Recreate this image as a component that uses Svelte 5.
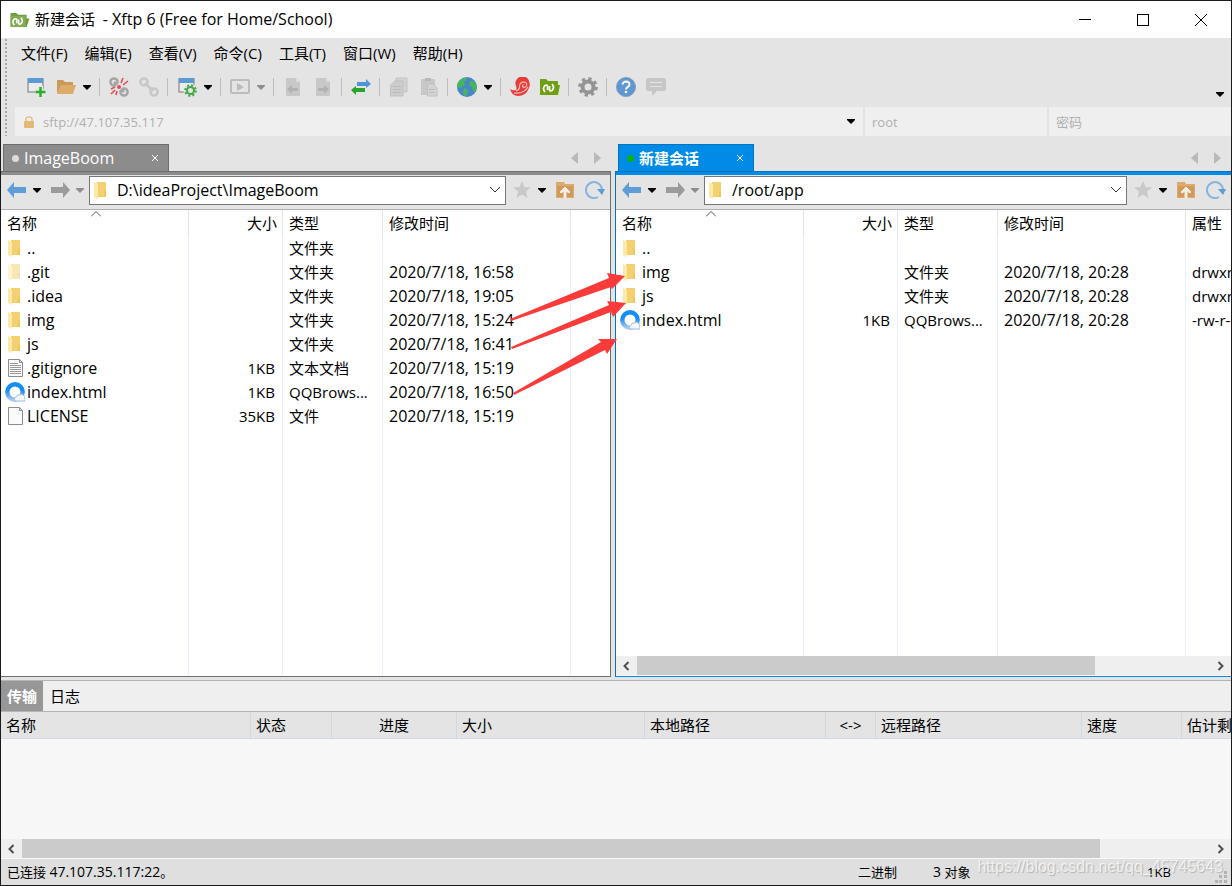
<script lang="ts">
  type IconName = 'folder' | 'folder-dim' | 'text' | 'html' | 'file';

  interface FileRow {
    icon: IconName;
    name: string;
    size?: string;
    type?: string;
    time?: string;
    attr?: string;
  }

  interface Pane {
    id: string;
    title: string;
    path: string;
    remote: boolean;
    rows: FileRow[];
  }

  const menus = ['文件(F)', '编辑(E)', '查看(V)', '命令(C)', '工具(T)', '窗口(W)', '帮助(H)'];

  // '|' is a separator, 'v' a drop-down caret, 'x' a disabled caret
  const tools = [
    'new', 'open', 'v', '|', 'disconnect', 'link', '|', 'config', 'v', '|', 'play', 'x', '|',
    'back', 'forward', '|', 'transfer', '|', 'copy', 'paste', '|', 'globe', 'v', '|',
    'xshell', 'xftp', '|', 'gear', '|', 'help', 'chat'
  ];

  const panes: Pane[] = [
    {
      id: 'local',
      title: 'ImageBoom',
      path: 'D:\\ideaProject\\ImageBoom',
      remote: false,
      rows: [
        { icon: 'folder', name: '..', type: '文件夹' },
        { icon: 'folder-dim', name: '.git', type: '文件夹', time: '2020/7/18, 16:58' },
        { icon: 'folder', name: '.idea', type: '文件夹', time: '2020/7/18, 19:05' },
        { icon: 'folder', name: 'img', type: '文件夹', time: '2020/7/18, 15:24' },
        { icon: 'folder', name: 'js', type: '文件夹', time: '2020/7/18, 16:41' },
        { icon: 'text', name: '.gitignore', size: '1KB', type: '文本文档', time: '2020/7/18, 15:19' },
        { icon: 'html', name: 'index.html', size: '1KB', type: 'QQBrows...', time: '2020/7/18, 16:50' },
        { icon: 'file', name: 'LICENSE', size: '35KB', type: '文件', time: '2020/7/18, 15:19' }
      ]
    },
    {
      id: 'remote',
      title: '新建会话',
      path: '/root/app',
      remote: true,
      rows: [
        { icon: 'folder', name: '..' },
        { icon: 'folder', name: 'img', type: '文件夹', time: '2020/7/18, 20:28', attr: 'drwxr-xr-x' },
        { icon: 'folder', name: 'js', type: '文件夹', time: '2020/7/18, 20:28', attr: 'drwxr-xr-x' },
        { icon: 'html', name: 'index.html', size: '1KB', type: 'QQBrows...', time: '2020/7/18, 20:28', attr: '-rw-r--r--' }
      ]
    }
  ];

  const queueColumns = [
    { label: '名称', width: 250 },
    { label: '状态', width: 81 },
    { label: '进度', width: 125, center: true },
    { label: '大小', width: 188 },
    { label: '本地路径', width: 181 },
    { label: '<->', width: 50, center: true },
    { label: '远程路径', width: 206 },
    { label: '速度', width: 100 },
    { label: '估计剩余时间', width: 150 }
  ];

  let queueTab = $state('传输');
</script>

{#snippet caret(disabled: boolean, label: string)}
  <button class="caret" {disabled} aria-label={label}>
    <svg width="8" height="5" viewBox="0 0 8 5"><path d="M0 0h8v1L4 5 0 1z" fill={disabled ? '#8e8e8e' : '#000'} /></svg>
  </button>
{/snippet}

{#snippet xftpMark()}
  <path d="M6 14q-3-3.500 0-6.500 2-1 2.500.5V12M13 6q3 3.500 0 6.500-2 1-2.500-.5V8" fill="none" stroke="#fff" stroke-width="1.700" />
{/snippet}

{#snippet toolIcon(name: string)}
  <svg width="20" height="20" viewBox="0 0 20 20">
    {#if name === 'new' || name === 'config'}
      <rect x="2" y="2" width="15" height="13" fill="#ececec" stroke="#9b9b9b" stroke-width="1.500" />
      <rect x="2" y="1" width="15" height="5" fill="#5b9bd5" />
      {#if name === 'new'}
        <path d="M14.500 9v11M9 14.500h11" stroke="#e4e4e4" stroke-width="5" />
        <path d="M14.500 10v10M9.500 15h10" stroke="#2cae2c" stroke-width="2.500" />
      {:else}
        <circle cx="13.500" cy="13.500" r="7" fill="#e4e4e4" />
        <circle cx="13.500" cy="13.500" r="3.500" fill="none" stroke="#43a843" stroke-width="2" />
        <circle cx="13.500" cy="13.500" r="5.300" fill="none" stroke="#43a843" stroke-width="2" stroke-dasharray="2.080" />
      {/if}
    {:else if name === 'open'}
      <path d="M1 17V3h6l2 2h8v4H5z" fill="#c99a5a" />
      <path d="M1 17 5 8h15l-3 9z" fill="#dcab68" />
    {:else if name === 'disconnect' || name === 'link'}
      <g fill="none" stroke={name === 'link' ? '#c8c8c8' : '#a5a5a5'} stroke-width="2.500">
        <circle cx="5" cy="5" r="3.600" />
        <circle cx="15" cy="15" r="3.600" />
        {#if name === 'link'}
          <path d="m6 6 8 8" stroke-width="3" />
        {:else}
          <path d="m5 5 4 4M11 11l4 4" />
        {/if}
      </g>
      {#if name === 'disconnect'}
        <path d="m8 8 4 4" stroke="#e4e4e4" stroke-width="4" />
        <path d="m12 6 2-5M14 8l5-4M2 12l4-2M2 17l4-4M7 18l1-4" stroke="#e44c53" stroke-width="1.600" />
        <circle cx="10" cy="10" r="2" fill="#e44c53" />
      {/if}
    {:else if name === 'play'}
      <rect x="1" y="3" width="18" height="13" rx="1" fill="none" stroke="#bcbcbc" stroke-width="2" />
      <path d="m7 6 7 4-7 4z" fill="#bcbcbc" />
    {:else if name === 'back' || name === 'forward'}
      <path d="M3 1h10l4 4v14H3z" fill="#c8c8c8" />
      <path d="M13 1v4h4" fill="#dcdcdc" />
      {#if name === 'back'}
        <path d="m4 12 5-4v3h6v3H9v3z" fill="#b2b2b2" />
      {:else}
        <path d="m16 12-5-4v3H5v3h6v3z" fill="#b2b2b2" />
      {/if}
    {:else if name === 'transfer'}
      <path d="M6 5h9V2l5 5-5 4V9H6z" fill="#4f93d8" />
      <path d="M14 11H5V9l-5 4 5 5v-3h9z" fill="#2aa52a" />
    {:else if name === 'copy'}
      <path d="M7 1h11v14H7z" fill="#d2d2d2" stroke="#c4c4c4" />
      <path d="M1.500 8 6 4h8v15H1.500z" fill="#cdcdcd" stroke="#c0c0c0" />
      <path d="M4 9.500h8M4 12.500h8M4 15.500h8" stroke="#bababa" />
    {:else if name === 'paste'}
      <path d="M2 2h14v16H2z" fill="#c8c8c8" />
      <path d="M6 1h6v3H6z" fill="#b8b8b8" />
      <path d="M8.500 7H14l4 4v8H8.500z" fill="#d4d4d4" stroke="#c0c0c0" />
      <path d="M10 12.500h6M10 15.500h6" stroke="#bababa" />
    {:else if name === 'globe'}
      <circle cx="10" cy="10" r="10" fill="#4a86c5" />
      <path d="M2 4q4-4 8-3-1 3-3 4l1 3-3 2-2 1-3-1q0-4 2-6M7 11l4 2-1 5-3 1-1-4zM13 4l4 0q3 3 3 7l-2 4-2-1-1-4-3-2z" fill="#43b65f" />
    {:else if name === 'xshell'}
      <path d="M6 9a7 7 0 0 1 12-7q3 4 1 9-3 8-11 8-6 0-8-7 3 2 6 1 1-1 0-4z" fill="#e93d3a" />
      <path d="M6 14q4-1 3.500-5 .5-4 4.500-4 3.500.5 2.500 4-2 2.500-4 .5 0-1.500 1-2M4 16q10 1 14-6" fill="none" stroke="#f3c6c2" stroke-width="1.100" />
    {:else if name === 'xftp'}
      <path d="M0 2h6l2 2h10v4h2l-2 10H0z" fill="#6f9f13" />
      <g transform="translate(-1 1)">{@render xftpMark()}</g>
    {:else if name === 'gear'}
      <circle cx="10" cy="10" r="5.500" fill="none" stroke="#949494" stroke-width="4" />
      <circle cx="10" cy="10" r="8.300" fill="none" stroke="#949494" stroke-width="3" stroke-dasharray="3.260" />
    {:else if name === 'help'}
      <circle cx="10" cy="10" r="9.500" fill="#5f97d3" stroke="#7c9dc0" />
      <path d="M6.500 7.500q.5-3 3.500-3 3.500.2 3.500 3 0 1.500-2 2.700-1.500 1-1.500 2.300" fill="none" stroke="#fff" stroke-width="2" />
      <circle cx="10" cy="15" r="1.300" fill="#fff" />
    {:else if name === 'chat'}
      <path d="M2 1h16q2 0 2 2v9q0 2-2 2h-7l-5 5v-5H2q-2 0-2-2V3q0-2 2-2z" fill="#c6c6c6" />
      <path d="M4 5.500h12M4 9.500h12" stroke="#e4e4e4" />
    {/if}
  </svg>
{/snippet}

{#snippet fileIcon(name: IconName)}
  {#if name === 'folder' || name === 'folder-dim'}
    <svg width="20" height="20" viewBox="0 0 20 20" opacity={name === 'folder-dim' ? 0.5 : 1}>
      <path d="M6 2h9v15H5z" fill="#f3d070" />
      <path d="M13 11h2v6h-2z" fill="#eec558" />
      <path d="m3 2 4 2v14l-1 1-3-2z" fill="#ffe9a8" />
    </svg>
  {:else if name === 'html'}
    <svg width="20" height="20" viewBox="0 0 20 20">
      <defs>
        <linearGradient id="ring" x1="0" y1="0" x2="0" y2="1">
          <stop offset="0.400" stop-color="#168cf5" />
          <stop offset="1" stop-color="#a9c9e8" />
        </linearGradient>
      </defs>
      <circle cx="10" cy="10" r="7.700" fill="#fff" stroke="url(#ring)" stroke-width="4.400" />
      <path d="M10 19q-2-3 1-4 1-3 4-2 1-2 3 0 2 1 2 4v2z" fill="#f4f8fd" stroke="#9dbbe0" />
    </svg>
  {:else}
    <svg width="20" height="20" viewBox="0 0 20 20">
      <path d="M3.500 1.500h11l3 3v14h-14z" fill="#fafafa" stroke="#8b8b8b" />
      <path d="M14.500 1.500v3h3" fill="none" stroke="#8b8b8b" />
      {#if name === 'text'}
        <path d="M5 5.500h8M5 7.500h11M5 9.500h11M5 11.500h11M5 13.500h11M5 15.500h11" stroke="#9a9a9a" />
      {/if}
    </svg>
  {/if}
{/snippet}

{#snippet scrollbar(thumb: number)}
  <div class="scrollbar">
    <button aria-label="向左滚动">
      <svg width="8" height="10" viewBox="0 0 8 10"><path d="M5.500 1 1.500 5l4 4" fill="none" stroke="#505050" stroke-width="2" /></svg>
    </button>
    <div class="track"><div class="thumb" style={`width: ${thumb}%`}></div></div>
    <button aria-label="向右滚动">
      <svg width="8" height="10" viewBox="0 0 8 10"><path d="m1.500 1 4 4-4 4" fill="none" stroke="#505050" stroke-width="2" /></svg>
    </button>
  </div>
{/snippet}

<div class="window">
  <header class="titlebar">
    <svg width="20" height="16" viewBox="0 1 20 17">
      <path d="M0 2h6l2 2h9v4h3l-3 9H0z" fill="#6f9a3e" />
      <path d="M0 5h16v12H0z" fill="#82ab52" />
      <g transform="translate(-2 1)">{@render xftpMark()}</g>
    </svg>
    <h1>新建会话&nbsp; <span class="latin">- Xftp 6 (Free for Home/School)</span></h1>
    <div class="controls">
      <button aria-label="最小化"><svg width="14" height="14" viewBox="0 0 14 14"><path d="M1 6.500h12" stroke="#000" /></svg></button>
      <button aria-label="最大化"><svg width="14" height="14" viewBox="0 0 14 14"><rect x="1.500" y="1.500" width="11" height="11" fill="none" stroke="#000" /></svg></button>
      <button aria-label="关闭"><svg width="14" height="14" viewBox="0 0 14 14"><path d="m1 1 12 12M13 1 1 13" stroke="#000" /></svg></button>
    </div>
  </header>

  <div class="bars">
    <nav class="menu">
      {#each menus as item}
        <button>{item}</button>
      {/each}
    </nav>

    <div class="toolbar">
      {#each tools as tool}
        {#if tool === '|'}
          <span class="sep"></span>
        {:else if tool === 'v' || tool === 'x'}
          {@render caret(tool === 'x', '更多')}
        {:else}
          <button class="tool" aria-label={tool}>{@render toolIcon(tool)}</button>
        {/if}
      {/each}
      <div class="overflow">{@render caret(false, '工具栏选项')}</div>
    </div>

    <div class="address">
      <div class="host">
        <svg width="12" height="12" viewBox="0 0 12 12">
          <path d="M3 6V3q0-2 3-2t3 2v3" fill="none" stroke="#e4c08a" stroke-width="1.500" />
          <rect x="1" y="5" width="10" height="7" rx="1" fill="#e6b877" />
        </svg>
        <input aria-label="主机" placeholder="sftp://47.107.35.117" />
        {@render caret(false, '主机列表')}
      </div>
      <input class="user" aria-label="用户名" placeholder="root" />
      <input class="password" aria-label="密码" type="password" placeholder="密码" />
    </div>
  </div>

  <main class="panes">
    {#each panes as pane}
      <section class="pane" class:remote={pane.remote}>
        <div class="tabs">
          <div class="tab">
            <span class="dot"></span>
            <button class="tab-title">{pane.title}</button>
            <button class="close" aria-label="关闭标签">
              <svg width="8" height="8" viewBox="0 0 8 8"><path d="m1 1 6 6M7 1 1 7" stroke="#fff" /></svg>
            </button>
          </div>
          <div class="tab-nav">
            <button aria-label="上一个标签"><svg width="8" height="12" viewBox="0 0 8 12"><path d="M7 0v12L0 6z" fill="#b9b9b9" /></svg></button>
            <button aria-label="下一个标签"><svg width="8" height="12" viewBox="0 0 8 12"><path d="M1 0v12l7-6z" fill="#b9b9b9" /></svg></button>
          </div>
        </div>

        <div class="pane-body">
          <div class="nav">
            <button class="tool" aria-label="后退">
              <svg width="20" height="20" viewBox="0 0 20 20"><path d="m0 10 7-8v5h12v6H7v5z" fill="#5f9dd6" /></svg>
            </button>
            {@render caret(false, '后退历史')}
            <button class="tool next" aria-label="前进">
              <svg width="20" height="20" viewBox="0 0 20 20"><path d="m20 10-7-8v5H1v6h12v5z" fill="#9b9b9b" /></svg>
            </button>
            {@render caret(true, '前进历史')}
            <div class="path">
              {@render fileIcon('folder')}
              <input class="latin" aria-label="路径" value={pane.path} />
              <button aria-label="路径列表">
                <svg width="10" height="6" viewBox="0 0 10 6"><path d="m0 0 5 5 5-5" fill="none" stroke="#333" /></svg>
              </button>
            </div>
            <button class="tool star" aria-label="收藏">
              <svg width="20" height="20" viewBox="0 0 20 20"><path d="m10 1 2.500 6 6.500.5-5 4 1.500 6.500-5.500-3.500L4.500 18 6 11.500l-5-4L7.500 7z" fill="#c9c9c9" /></svg>
            </button>
            {@render caret(false, '收藏夹')}
            <button class="tool up" aria-label="上级目录">
              <svg width="20" height="20" viewBox="0 0 20 20">
                <path d="M1 2h8l1 2h9v14H1z" fill="#dcab6c" />
                <path d="M2 6h16v11H2z" fill="#d09a5c" />
                <path d="m10 7 5 5-1 1-3-2v7H9v-7l-3 2-1-1z" fill="#f6ede2" stroke="#f6ede2" />
              </svg>
            </button>
            <button class="tool refresh" aria-label="刷新">
              <svg width="20" height="20" viewBox="0 0 20 20">
                <path d="M13 17a8 8 0 1 1 4-7" fill="none" stroke="#86b5df" stroke-width="2" />
                <path d="M12 9h8l-3 6z" fill="#5f9dd6" />
              </svg>
            </button>
          </div>

          <div class="list">
            <table class="files">
              <colgroup>
                <col class="c-name" />
                <col class="c-size" />
                <col class="c-type" />
                <col class="c-time" />
                <col />
              </colgroup>
              <thead>
                <tr>
                  <th>
                    名称
                    <svg class="sort" width="10" height="6" viewBox="0 0 10 6"><path d="m0 5.500 5-5 5 5" fill="none" stroke="#555" /></svg>
                  </th>
                  <th class="size">大小</th>
                  <th>类型</th>
                  <th>修改时间</th>
                  <th>{pane.remote ? '属性' : ''}</th>
                </tr>
              </thead>
              <tbody>
                {#each pane.rows as row}
                  <tr>
                    <td><div class="name latin">{@render fileIcon(row.icon)}{row.name}</div></td>
                    <td class="size">{row.size ?? ''}</td>
                    <td>{row.type ?? ''}</td>
                    <td class="latin">{row.time ?? ''}</td>
                    <td>{row.attr ?? ''}</td>
                  </tr>
                {/each}
                <tr class="filler"><td></td><td></td><td></td><td></td><td></td></tr>
              </tbody>
            </table>
          </div>
          {#if pane.remote}
            {@render scrollbar(80)}
          {/if}
        </div>
      </section>
    {/each}

    <svg class="arrows" width="120" height="126" viewBox="508 270 120 126" fill="#fb3b3a">
      <path d="M510 319 609 278 607 273 625 276 612 289 611 287 511 321z" />
      <path d="M511 347 609 305 607 301 626 303 613 317 611 312 512 349z" />
      <path d="M513 393 601 342 598 339 617 339 607 354 605 350 514 395z" />
    </svg>
  </main>

  <section class="queue">
    <div class="queue-tabs">
      {#each ['传输', '日志'] as tab}
        <button class:active={queueTab === tab} onclick={() => (queueTab = tab)}>{tab}</button>
      {/each}
    </div>
    <div class="queue-list">
      <table>
        <colgroup>
          {#each queueColumns as col}
            <col style={`width: ${col.width}px`} />
          {/each}
        </colgroup>
        <thead>
          <tr>
            {#each queueColumns as col}
              <th class:center={col.center}>{col.label}</th>
            {/each}
          </tr>
        </thead>
      </table>
    </div>
    {@render scrollbar(90.7)}
  </section>

  <footer class="status">
    <span class="connected">已连接 <span class="number">47.107.35.117:22</span>。</span>
    <span class="mode">二进制</span>
    <span class="count"><span class="number">3</span> 对象</span>
    <span class="total">1KB</span>
    <svg width="12" height="12" viewBox="0 0 12 12" fill="#b4b4b4">
      <path d="M9 0h3v3H9zM4 4h3v3H4zM9 4h3v3H9zM0 9h3v3H0zM4 9h3v3H4zM9 9h3v3H9z" />
    </svg>
    <span class="watermark">https://blog.csdn.net/qq_45745643</span>
  </footer>
</div>

<style>
  :global(body) {
    margin: 0;
  }

  .window {
    box-sizing: border-box;
    height: 100vh;
    display: flex;
    flex-direction: column;
    border: 1px solid #1b1b1b;
    background: #e4e4e4;
    color: #000;
    font: 15px/20px 'Open Sans', 'Noto Sans CJK SC', sans-serif;
    overflow: hidden;
  }

  button,
  input {
    margin: 0;
    padding: 0;
    border: 0;
    background: none;
    font: inherit;
    color: inherit;
    border-radius: 0;
  }

  button {
    display: flex;
    align-items: center;
    justify-content: center;
    flex-shrink: 0;
    white-space: nowrap;
  }

  input {
    min-width: 0;
    outline: none;
  }

  input::placeholder {
    color: #b0b0b0;
    opacity: 1;
  }

  svg {
    display: block;
    flex-shrink: 0;
  }

  /* Latin text runs a little larger than the CJK labels */
  .latin {
    font-size: 16px;
  }

  .titlebar {
    height: 37px;
    display: flex;
    align-items: center;
    padding: 0 1px 0 9px;
    background: #fff;
  }

  h1 {
    flex: 1;
    margin: 0 0 2px 5px;
    font-size: 15px;
    font-weight: 400;
  }

  .controls {
    display: flex;
  }

  .controls button {
    width: 58px;
    height: 37px;
  }

  .bars {
    position: relative;
    padding-left: 14px;
  }

  .bars::before {
    content: '';
    position: absolute;
    top: 1px;
    bottom: 0;
    left: 4px;
    width: 2px;
    background: repeating-linear-gradient(#a8a8a8 0 2px, #e4e4e4 2px 4px);
  }

  .menu {
    height: 30px;
    display: flex;
    align-items: center;
    gap: 17px;
    padding-left: 6px;
  }

  .toolbar {
    height: 34px;
    display: flex;
    align-items: center;
    padding: 2px 0 0 11px;
  }

  .tool {
    width: 20px;
    height: 20px;
  }

  .tool + .tool {
    margin-left: 10px;
  }

  .caret {
    width: 20px;
    height: 20px;
  }

  .toolbar .caret {
    width: 22px;
  }

  .sep {
    width: 1px;
    height: 18px;
    margin: 0 9px 0 8px;
    background: #bdbdbd;
  }

  .caret + .sep {
    margin-left: 1px;
  }

  .overflow {
    margin-left: auto;
    align-self: flex-end;
  }

  .address {
    display: flex;
    gap: 2px;
    height: 29px;
    padding-top: 3px;
    font-size: 13px;
  }

  .host,
  .user,
  .password {
    background: #efefef;
  }

  .host {
    flex: 1;
    display: flex;
    align-items: center;
    padding-left: 8px;
  }

  .host input {
    flex: 1;
    margin-left: 8px;
    height: 29px;
  }

  .host .caret {
    margin-right: 2px;
  }

  .user,
  .password {
    box-sizing: border-box;
    flex-basis: 182px;
    padding: 0 7px;
  }

  .panes {
    position: relative;
    flex: 1;
    min-height: 0;
    display: grid;
    grid-template-columns: minmax(0, 610fr) minmax(0, 616fr);
    gap: 4px;
  }

  .pane {
    --accent: #8c8c8c;
    --accent-edge: #6e6e6e;
    min-height: 0;
    display: flex;
    flex-direction: column;
  }

  .pane.remote {
    --accent: #008be6;
    --accent-edge: #0074c0;
  }

  .tabs {
    display: flex;
    align-items: flex-end;
    height: 35px;
    padding-left: 2px;
  }

  .remote .tabs {
    padding-left: 3px;
  }

  .tab {
    box-sizing: border-box;
    display: flex;
    align-items: center;
    height: 27px;
    padding: 0 7px 0 8px;
    border: 1px solid var(--accent-edge);
    border-bottom: 0;
    background: var(--accent);
    color: #fff;
    font-size: 16px;
  }

  .remote .tab {
    font-size: 15px;
    font-weight: 700;
  }

  .dot {
    width: 7px;
    height: 7px;
    border-radius: 50%;
    background: #dcdcdc;
  }

  .remote .dot {
    background: #0bb30b;
  }

  .tab-title {
    margin: 0 35px 0 5px;
  }

  .close {
    width: 12px;
    height: 20px;
  }

  .tab-nav {
    display: flex;
    align-items: center;
    gap: 14px;
    height: 27px;
    margin-left: auto;
    padding-right: 10px;
  }

  .pane-body {
    flex: 1;
    min-height: 0;
    display: flex;
    flex-direction: column;
    border-top: 1px solid var(--accent-edge);
    border-right: 1px solid var(--accent-edge);
    border-bottom: 1px solid var(--accent-edge);
  }

  .remote .pane-body {
    border-right: 0;
    border-bottom-color: var(--accent);
    border-left: 1px solid var(--accent-edge);
  }

  .nav {
    display: flex;
    align-items: center;
    height: 30px;
    padding: 0 5px 4px 6px;
    border-top: 3px solid var(--accent);
    border-bottom: 1px solid #b0b0b0;
  }

  .nav .next {
    margin-left: 3px;
  }

  .path {
    box-sizing: border-box;
    flex: 1;
    min-width: 0;
    display: flex;
    align-items: center;
    height: 29px;
    margin-left: -1px;
    padding-left: 1px;
    border: 1px solid #767676;
    background: #fff;
  }

  .path input {
    flex: 1;
    margin-left: 6px;
  }

  .path button {
    width: 20px;
    height: 27px;
  }

  .nav .star {
    margin-left: 6px;
  }

  .nav .up {
    margin-left: 3px;
  }

  .list {
    flex: 1;
    min-height: 0;
    overflow: hidden;
    background: #fff;
  }

  table {
    table-layout: fixed;
    width: 100%;
    border-collapse: separate;
    border-spacing: 0;
  }

  th {
    font-weight: 400;
    text-align: left;
    white-space: nowrap;
  }

  .files {
    height: 100%;
  }

  .c-name,
  .c-time {
    width: 188px;
  }

  .c-size {
    width: 94px;
  }

  .c-type {
    width: 100px;
  }

  .files th {
    position: relative;
    height: 26px;
    padding: 0 5px 0 6px;
    border-right: 1px solid #e3e3e3;
  }

  .files td {
    height: 24px;
    padding: 0 7px 0 6px;
    border-right: 1px solid #e6f1fd;
    white-space: nowrap;
  }

  .files th:last-child,
  .files td:last-child {
    border-right: 0;
  }

  .files .filler td {
    height: auto;
  }

  .files .size {
    text-align: right;
  }

  .sort {
    position: absolute;
    top: 1px;
    left: 50%;
    margin-left: -4px;
  }

  .name {
    display: flex;
    align-items: center;
    gap: 2px;
    margin-left: -2px;
  }

  .arrows {
    position: absolute;
    top: 134px;
    left: 507px;
    pointer-events: none;
  }

  .scrollbar {
    display: flex;
    height: 19px;
    border-bottom: 1px solid #f8f8f8;
    background: #efefef;
  }

  .scrollbar button {
    width: 21px;
  }

  .track {
    flex: 1;
  }

  .thumb {
    height: 19px;
    background: #cbcbcb;
  }

  .queue {
    margin-top: 3px;
    border-top: 1px solid #b4b4b4;
  }

  .queue-tabs {
    display: flex;
    height: 30px;
    background: #efefef;
    border-bottom: 1px solid #b4b4b4;
  }

  .queue-tabs button {
    padding: 0 6px;
  }

  .queue-tabs button + button {
    padding: 0 7px;
  }

  .queue-tabs .active {
    background: #979797;
    color: #fff;
    font-weight: 700;
  }

  .queue-list {
    height: 127px;
    overflow: hidden;
    background: #f7f7f7;
  }

  .queue-list th {
    box-sizing: border-box;
    height: 27px;
    padding: 0 5px;
    border-right: 1px solid #cfd8e3;
    border-bottom: 1px solid #d3d9e0;
    background: #e4e4e4;
  }

  .queue-list th.center {
    text-align: center;
  }

  .status {
    position: relative;
    display: flex;
    align-items: center;
    height: 26px;
    padding: 0 4px 0 6px;
    background: #dfdfdf;
    font-size: 13px;
  }

  .number {
    font-size: 14px;
  }

  .connected {
    flex: 1;
  }

  .mode {
    width: 75px;
  }

  .count {
    width: 214px;
  }

  .total {
    width: 68px;
  }

  .status svg {
    align-self: flex-end;
    margin-bottom: 2px;
  }

  .watermark {
    position: absolute;
    top: -2px;
    right: 8px;
    font: 16px/20px 'Liberation Sans', sans-serif;
    color: rgba(255, 255, 255, 0.7);
    text-shadow: 1px 1px 1px rgba(0, 0, 0, 0.2);
  }
</style>
